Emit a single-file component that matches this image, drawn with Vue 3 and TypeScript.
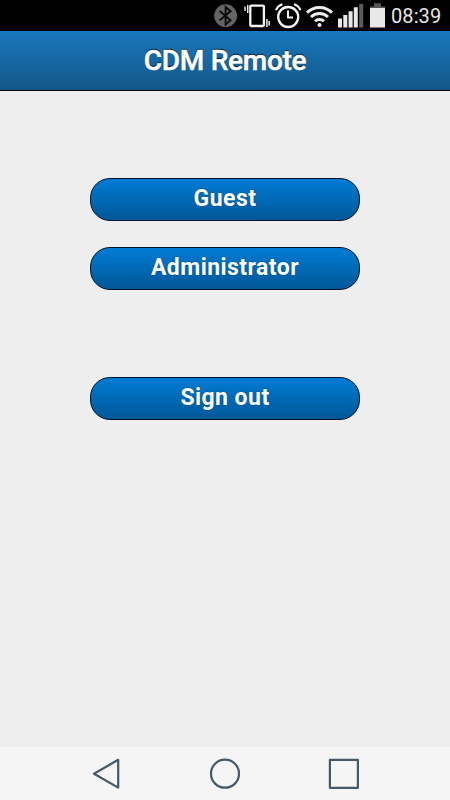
<script setup lang="ts">
interface Action {
  id: string
  label: string
  spaced?: boolean
}

const actions: Action[] = [
  { id: 'guest', label: 'Guest' },
  { id: 'admin', label: 'Administrator' },
  { id: 'signout', label: 'Sign out', spaced: true },
]
</script>

<template>
  <div class="screen">
    <div class="status">
      <svg width="29" height="31" viewBox="212 0 29 31">
        <circle cx="225.6" cy="15.7" r="11.4" fill="#646464" />
        <path d="M219.6 11 230.6 20.2 225.6 24.5V7L230.6 11.2 219.6 20.4" fill="none" stroke="#080808" stroke-width="1.8" />
      </svg>
      <svg width="32" height="31" viewBox="241 0 32 31" fill="none" stroke="#f4f4f4">
        <rect x="250.3" y="5.6" width="13.6" height="20.4" rx="1" stroke-width="2.3" />
        <path d="M245 6.5V11M247.7 5V13" stroke-width="1.4" />
        <path d="M266.9 19V27M269.2 21V25.5" stroke-width="1.6" stroke="#ddd" />
      </svg>
      <svg width="30" height="31" viewBox="273 0 30 31" fill="none" stroke="#f4f4f4">
        <circle cx="288.2" cy="17" r="10" stroke-width="2.3" />
        <path d="M288 10.5V17.6H293" stroke-width="2" />
        <path d="M276 10.2Q277.6 6 282.4 4.3M294 4.3Q298.8 6 300.4 10.2" stroke-width="2.2" />
      </svg>
      <svg width="32" height="31" viewBox="303 0 32 31" fill="none" stroke="#ececec" stroke-width="3">
        <path d="M307 12.6A17.6 17.6 0 0 1 332 12.6M311 17A12 12 0 0 1 328 17M315 21.3A6.4 6.4 0 0 1 324 21.3" />
        <circle cx="319.5" cy="25" r="2" fill="#ececec" stroke="none" />
      </svg>
      <svg width="31" height="31" viewBox="335 0 31 31" fill="#e8e8e8">
        <path d="M338 18.5h4v9h-4zM343.3 15h4v12.5h-4zM348.6 11.3h4v16.2h-4zM353.8 7.3h4v20.2h-4z" />
        <path d="M359.2 3.8h4v23.7h-4z" fill="#5c5c5c" />
      </svg>
      <svg width="22" height="31" viewBox="366 0 22 31">
        <path d="M374 3.2h7v3.2h4v2h-15v-2h4z" fill="#555" />
        <path d="M370 8h15v19.5h-15z" fill="#e8e8e8" />
      </svg>
      <span class="time">08:39</span>
    </div>
    <header class="header"><h1>CDM Remote</h1></header>
    <main class="content">
      <button v-for="a in actions" :key="a.id" class="action" :class="{ spaced: a.spaced }">
        {{ a.label }}
      </button>
    </main>
    <nav class="nav">
      <svg width="30" height="32" viewBox="91 758 30 32"><path d="M118.2 759.8V787.6L94 773.7Z" /></svg>
      <svg width="32" height="32" viewBox="209 758 32 32"><circle cx="225" cy="773.7" r="14" /></svg>
      <svg width="32" height="32" viewBox="328 758 32 32"><rect x="329.9" y="759.8" width="28" height="28" /></svg>
    </nav>
  </div>
</template>

<style>
body {
  margin: 0;
}
</style>

<style scoped>
.screen {
  width: 450px;
  height: 800px;
  display: flex;
  flex-direction: column;
  background: #eee;
  font-family: Roboto, sans-serif;
  overflow: hidden;
}
.status {
  height: 31px;
  flex: none;
  display: flex;
  background: #000;
  padding-left: 212px;
}
.status svg {
  flex: none;
}
.time {
  margin-left: 3px;
  color: #e6e6e6;
  font-size: 20px;
  letter-spacing: 0.1px;
  line-height: 33px;
}
.header {
  box-sizing: border-box;
  height: 60px;
  flex: none;
  display: flex;
  justify-content: center;
  background: linear-gradient(#1978be, #145788);
  border-bottom: 1px solid #000;
}
h1 {
  margin: 0;
  color: #fff;
  font-size: 28px;
  font-weight: 500;
  letter-spacing: -0.25px;
  -webkit-text-stroke: 0.5px #fff;
  line-height: 59px;
  text-shadow: 0 -1px 1px #000;
}
.content {
  flex: 1;
  display: flex;
  flex-direction: column;
  align-items: center;
  gap: 26px;
  padding-top: 87px;
}
.action {
  box-sizing: border-box;
  width: 270px;
  height: 43px;
  padding: 0 0 1px;
  border: 1px solid #001226;
  border-radius: 20px;
  background: linear-gradient(#007cd5, #005797);
  color: #fff;
  font: 700 23px/38px Roboto, sans-serif;
  letter-spacing: 0.45px;
  text-shadow: 0 0 1px #00386c;
}
.action.spaced {
  margin-top: 61px;
}
.nav {
  box-sizing: border-box;
  height: 53px;
  flex: none;
  display: flex;
  justify-content: space-between;
  padding: 11px 90px 0 91px;
  background: #f5f5f5;
}
.nav svg {
  fill: none;
  stroke: #455a68;
  stroke-width: 2.2;
  stroke-linejoin: round;
}
</style>
